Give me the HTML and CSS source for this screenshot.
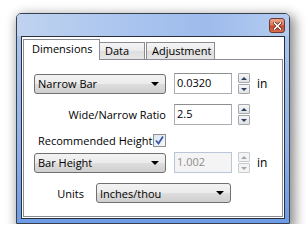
FILE: index.html
```html
<!DOCTYPE html>
<html lang="en">
<head>
    <meta charset="UTF-8">
    <title>Barcode Dimensions</title>
    <link rel="stylesheet" href="styles.css">
</head>
<body>
    <div class="window">
        <div class="titlebar">
            <div class="close-btn">
                <svg width="9" height="8" viewBox="0 0 9 8">
                    <path d="M1.5 1 L7.5 7 M7.5 1 L1.5 7" stroke="#5a1e12" stroke-width="3" stroke-linecap="square"/>
                    <path d="M1.5 1 L7.5 7 M7.5 1 L1.5 7" stroke="#fff" stroke-width="1.6" stroke-linecap="square"/>
                </svg>
            </div>
        </div>
        <div class="client">
            <div class="tabs">
                <div class="tab tab-active">Dimensions</div>
                <div class="tab tab-data">Data</div>
                <div class="tab tab-adjust">Adjustment</div>
            </div>
            <div class="panel">
                <div class="row row-1">
                    <div class="combo combo-wide"><span>Narrow Bar</span><i class="arrow"></i></div>
                    <div class="field">0.0320</div>
                    <div class="spinner">
                        <div class="spin-btn"><i class="up"></i></div>
                        <div class="spin-btn"><i class="down"></i></div>
                    </div>
                    <span class="unit">in</span>
                </div>
                <div class="row row-2">
                    <label class="label-right">Wide/Narrow Ratio</label>
                    <div class="field">2.5</div>
                    <div class="spinner">
                        <div class="spin-btn"><i class="up"></i></div>
                        <div class="spin-btn"><i class="down"></i></div>
                    </div>
                </div>
                <div class="row row-3">
                    <label class="check-label">Recommended Height</label>
                    <div class="checkbox">
                        <svg width="11" height="11" viewBox="0 0 11 11">
                            <path d="M2 5.5 L4.5 8.5 L9 1.5" fill="none" stroke="#3d58a0" stroke-width="1.8"/>
                        </svg>
                    </div>
                </div>
                <div class="row row-4">
                    <div class="combo combo-wide"><span>Bar Height</span><i class="arrow"></i></div>
                    <div class="field field-disabled">1.002</div>
                    <div class="spinner spinner-disabled">
                        <div class="spin-btn"><i class="up"></i></div>
                        <div class="spin-btn"><i class="down"></i></div>
                    </div>
                    <span class="unit">in</span>
                </div>
                <div class="row row-5">
                    <label class="label-units">Units</label>
                    <div class="combo combo-units"><span>Inches/thou</span><i class="arrow"></i></div>
                </div>
            </div>
        </div>
    </div>
</body>
</html>
```

FILE: styles.css
```css
body {
    margin: 0;
    background: #fff;
    font-family: "Open Sans", "Noto Sans", sans-serif;
    font-size: 11px;
    color: #000;
}
.window {
    box-sizing: border-box;
    width: 274px;
    height: 211px;
    margin: 13px 0 0 16px;
    border: 1px solid #37404c;
    border-radius: 5px 5px 0 0;
    background: linear-gradient(to bottom, #b7cdef 0, #a9c4ee 25px, #8fb2ea 60%, #6d9be6 100%);
    box-shadow: 3px 4px 12px 2px rgba(0, 0, 0, 0.45);
}
.titlebar {
    height: 22px;
    display: flex;
    justify-content: flex-end;
    align-items: flex-start;
    background: linear-gradient(to right, #c0d3f0 0, #a8c3ee 45%, #9dbbec 70%, #b5ccf0 100%);
    border-radius: 4px 4px 0 0;
}
.close-btn {
    box-sizing: border-box;
    width: 16px;
    height: 15px;
    margin: 4px 4px 0 0;
    border: 1px solid #6a3a30;
    border-radius: 3px;
    background: linear-gradient(to bottom, #eba48e 0, #dd7a5e 45%, #c7492c 55%, #d86d4c 100%);
    display: flex;
    align-items: center;
    justify-content: center;
}
.client {
    box-sizing: border-box;
    height: 183px;
    margin: 0 4px 4px 4px;
    border: 1px solid #2a2f38;
    background: #fff;
    padding-top: 2px;
}
.tabs {
    display: flex;
    align-items: flex-end;
    height: 20px;
    margin-left: 1px;
}
.tab {
    box-sizing: border-box;
    height: 17px;
    border: 1px solid #898c95;
    border-bottom: none;
    background: linear-gradient(to bottom, #f4f4f4 0, #ebebeb 50%, #dedede 51%, #e6e6e6 100%);
    padding: 0 0 0 5px;
    line-height: 15px;
}
.tab-active {
    position: relative;
    z-index: 1;
    width: 77px;
    height: 21px;
    margin-bottom: -1px;
    background: #fff;
    padding-left: 8px;
    line-height: 17px;
}
.tab-data {
    width: 46px;
    margin-left: -1px;
}
.tab-adjust {
    width: 69px;
    margin-left: 1px;
    padding-left: 5px;
}
.panel {
    box-sizing: border-box;
    height: 158px;
    margin: 0 1px;
    border: 1px solid #898c95;
    background: #fff;
    padding: 13px 0 0 10px;
}
.row {
    display: flex;
    align-items: center;
    height: 21px;
}
.row-2 {
    margin-top: 10px;
}
.row-3 {
    height: 14px;
    margin-top: 8px;
}
.row-4 {
    margin-top: 5px;
}
.row-5 {
    height: 20px;
    margin-top: 10px;
}
.combo {
    box-sizing: border-box;
    height: 20px;
    border: 1px solid #707070;
    border-radius: 3px;
    background: linear-gradient(to bottom, #f3f3f3 0, #ebebeb 48%, #dddddd 52%, #cfcfcf 100%);
    display: flex;
    align-items: center;
    justify-content: space-between;
    padding: 0 6px 0 3px;
}
.combo-wide {
    width: 132px;
}
.combo-units {
    width: 135px;
}
.arrow {
    width: 0;
    height: 0;
    border-left: 4px solid transparent;
    border-right: 4px solid transparent;
    border-top: 4px solid #000;
}
.field {
    box-sizing: border-box;
    width: 58px;
    height: 21px;
    margin-left: 8px;
    border: 1px solid #abadb3;
    border-top-color: #8e8f8f;
    background: #fff;
    padding-left: 2px;
    line-height: 18px;
    color: #000;
}
.field-disabled {
    border-color: #b8c6d8;
    background: #f4f4f4;
    color: #8d8d8d;
}
.spinner {
    display: flex;
    flex-direction: column;
    gap: 1px;
    margin-left: 6px;
}
.spin-btn {
    box-sizing: border-box;
    width: 12px;
    height: 10px;
    border: 1px solid #a3a8b0;
    border-radius: 1px;
    background: linear-gradient(to bottom, #f6f6f6, #e2e2e2);
    display: flex;
    align-items: center;
    justify-content: center;
}
.up {
    border-left: 3px solid transparent;
    border-right: 3px solid transparent;
    border-bottom: 3px solid #2b3f63;
}
.down {
    border-left: 3px solid transparent;
    border-right: 3px solid transparent;
    border-top: 3px solid #2b3f63;
}
.spinner-disabled .spin-btn {
    border-color: #c7ccd2;
    background: #f4f4f4;
}
.spinner-disabled .up {
    border-bottom-color: #a6a6a6;
}
.spinner-disabled .down {
    border-top-color: #a6a6a6;
}
.unit {
    margin-left: 7px;
    font-size: 12px;
}
.label-right {
    width: 132px;
    text-align: right;
}
.check-label {
    margin-left: 4px;
}
.checkbox {
    box-sizing: border-box;
    width: 13px;
    height: 13px;
    margin-left: 1px;
    border: 1px solid #8f8f8f;
    background: linear-gradient(to bottom right, #dbe6f6, #f4f8fd);
    display: flex;
    align-items: center;
    justify-content: center;
}
.label-units {
    width: 50px;
    text-align: right;
    margin-right: 12px;
}
```
